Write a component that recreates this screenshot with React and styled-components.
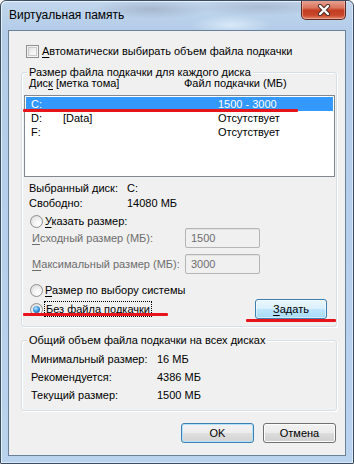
import React from "react";
import styled, { createGlobalStyle, css } from "styled-components";

const GlobalStyle = createGlobalStyle`
  html, body { margin: 0; padding: 0; background: #ffffff; }
  body {
    font-family: "Liberation Sans", Arial, sans-serif;
    font-size: 11px;
    color: #000;
  }
  * { box-sizing: border-box; }
`;

const Window = styled.div`
  position: relative;
  width: 354px;
  height: 464px;
  border: 1px solid #3b4d63;
  border-radius: 6px 6px 1px 1px;
  padding: 0 7px 7px;
  display: flex;
  flex-direction: column;
  white-space: nowrap;
  background:
    radial-gradient(ellipse 60px 10px at 150px 8px, rgba(120,130,150,0.35), transparent),
    radial-gradient(ellipse 70px 9px at 260px 6px, rgba(120,130,150,0.3), transparent),
    radial-gradient(ellipse 40px 10px at 230px 24px, rgba(230,245,255,0.7), transparent),
    linear-gradient(to bottom, #c2d7ee 0px, #b3cce8 30px, #b9d2ee 100%);
  box-shadow: inset 1px 1px 0 rgba(255,255,255,0.65), inset -1px -1px 0 rgba(255,255,255,0.5);
  overflow: hidden;
`;

const TitleBar = styled.div`
  height: 29px;
  display: flex;
  align-items: flex-start;
  justify-content: space-between;
`;

const TitleText = styled.div`
  padding: 7px 0 0 1px;
  font-size: 12px;
  line-height: 15px;
  color: #000;
`;

const CloseButton = styled.div`
  width: 45px;
  height: 20px;
  margin-top: -1px;
  border: 1px solid #5b2a20;
  border-top: none;
  border-radius: 0 0 5px 5px;
  background: linear-gradient(to bottom, #e8a798 0%, #d9765e 40%, #c33d22 55%, #c9472b 80%, #e2866a 100%);
  box-shadow: inset 0 0 0 1px rgba(255,210,200,0.45);
  display: flex;
  align-items: center;
  justify-content: center;
`;

const Client = styled.div`
  width: 338px;
  height: 426px;
  border: 1px solid #6b8099;
  background: #f0f0f0;
  display: flex;
  flex-direction: column;
`;

const CheckRow = styled.div`
  display: flex;
  align-items: center;
  height: 16px;
  margin-top: 12px;
  padding-left: 17px;
  gap: 3px;
`;

const CheckBox = styled.span`
  width: 13px;
  height: 13px;
  border: 1px solid #8e8f8f;
  background: linear-gradient(135deg, #dcdcdc 0%, #f4f4f4 60%, #ffffff 100%);
  box-shadow: inset 0 0 0 1px #f4f4f4, inset 0 0 0 2px #c9c9c9;
`;

const Key = styled.span`
  text-decoration: underline;
  text-underline-offset: 2px;
`;

const GroupBox = styled.div`
  position: relative;
  margin: ${(p) => p.$top}px 8px 0 12px;
  border: 1px solid #d5dfe5;
  border-radius: 3px;
  box-shadow: inset 1px 1px 0 #ffffff, 1px 1px 0 #ffffff;
  padding: ${(p) => p.$pad};
  display: flex;
  flex-direction: column;
`;

const Legend = styled.span`
  position: absolute;
  left: 5px;
  top: -7px;
  padding: 0 2px;
  line-height: 12px;
  background: #f0f0f0;
`;

const ColumnHeaders = styled.div`
  display: grid;
  grid-template-columns: 155px 1fr;
  height: 12px;
  line-height: 12px;
  margin-top: 4px;
  padding-left: 7px;
`;

const ListBox = styled.div`
  margin: 6px 1px 0 2px;
  height: 82px;
  background: #ffffff;
  border: 1px solid #828790;
  padding: 1px;
`;

const DiskRow = styled.div`
  display: grid;
  grid-template-columns: 32px 155px 1fr;
  height: 14px;
  line-height: 14px;
  padding-left: 5px;
  ${(p) =>
    p.$selected &&
    css`
      background: #3399ff;
      color: #ffffff;
    `}
`;

const InfoGrid = styled.div`
  display: grid;
  grid-template-columns: ${(p) => p.$col}px 1fr;
  grid-auto-rows: ${(p) => p.$row}px;
  align-items: center;
  margin-top: ${(p) => p.$top}px;
  padding-left: ${(p) => p.$left}px;
`;

const RadioRow = styled.div`
  display: flex;
  align-items: center;
  gap: 2px;
  height: 14px;
  margin-top: ${(p) => p.$top}px;
  padding-left: 8px;
`;

const Radio = styled.span`
  width: 13px;
  height: 13px;
  border-radius: 50%;
  border: 1px solid #8e8f8f;
  background: radial-gradient(circle at 65% 70%, #ffffff 0%, #f2f2f2 40%, #d4d4d4 100%);
  display: flex;
  align-items: center;
  justify-content: center;
  &::after {
    content: "";
    display: ${(p) => (p.$checked ? "block" : "none")};
    width: 7px;
    height: 7px;
    border-radius: 50%;
    background: radial-gradient(circle at 40% 35%, #bfe6ff 0%, #3d9ae0 45%, #12467a 100%);
  }
`;

const FocusLabel = styled.span`
  outline: 1px dotted #000;
  outline-offset: 0px;
  padding: 0 1px;
  line-height: 14px;
`;

const FieldRow = styled.div`
  display: grid;
  grid-template-columns: 153px 75px;
  align-items: center;
  height: 20px;
  margin-top: ${(p) => p.$top}px;
  padding-left: 10px;
  color: #6d6d6d;
`;

const Field = styled.div`
  height: 20px;
  border: 1px solid #b5b5b5;
  border-radius: 2px;
  background: #f0f0f0;
  color: #6d6d6d;
  padding-left: 5px;
  line-height: 18px;
  box-shadow: inset 0 1px 0 #e2e2e2;
`;

const BottomRow = styled.div`
  display: flex;
  align-items: center;
  justify-content: space-between;
  height: 20px;
  margin-top: 2px;
  padding-left: 8px;
  padding-right: 9px;
`;

const RadioLabel = styled.div`
  display: flex;
  align-items: center;
  gap: 2px;
`;

const Button = styled.div`
  width: ${(p) => p.$w}px;
  height: 20px;
  border-radius: 3px;
  display: flex;
  align-items: center;
  justify-content: center;
  color: #000;
  ${(p) =>
    p.$variant === "hot"
      ? css`
          border: 1px solid #3c7fb1;
          background: linear-gradient(to bottom, #eaf6fd 0%, #d9f0fc 50%, #bee6fd 51%, #a7d9f5 100%);
          box-shadow: inset 0 0 0 1px #ffffff80;
        `
      : p.$variant === "default"
      ? css`
          border: 1px solid #3c7fb1;
          background: linear-gradient(to bottom, #f4f4f4 0%, #ececec 50%, #dfdfdf 51%, #d3d3d3 100%);
          box-shadow: inset 0 0 0 1px #b4e1fb;
        `
      : css`
          border: 1px solid #707070;
          background: linear-gradient(to bottom, #f2f2f2 0%, #ebebeb 50%, #dddddd 51%, #cfcfcf 100%);
          box-shadow: inset 0 0 0 1px #fcfcfc;
        `}
`;

const ButtonBar = styled.div`
  display: flex;
  justify-content: flex-end;
  gap: 9px;
  margin: 12px 9px 0 0;
`;

const RedMark = styled.div`
  position: absolute;
  left: ${(p) => p.$x}px;
  top: ${(p) => p.$y}px;
  width: ${(p) => p.$w}px;
  height: 3px;
  background: #e8141c;
  border-radius: 1px;
`;

const disks = [
  { name: "C:", label: "", size: "1500 - 3000", selected: true },
  { name: "D:", label: "[Data]", size: "Отсутствует" },
  { name: "F:", label: "", size: "Отсутствует" },
];

export default function App() {
  return (
    <>
      <GlobalStyle />
      <Window>
        <TitleBar>
          <TitleText>Виртуальная память</TitleText>
          <CloseButton>
            <svg width="14" height="12" viewBox="0 0 14 12">
              <path d="M3 2 L11 10 M11 2 L3 10" stroke="#4a2a25" strokeWidth="4.2" strokeLinecap="round" />
              <path d="M3 2 L11 10 M11 2 L3 10" stroke="#ffffff" strokeWidth="2.4" strokeLinecap="round" />
            </svg>
          </CloseButton>
        </TitleBar>
        <Client>
          <CheckRow>
            <CheckBox />
            <span>
              <Key>А</Key>втоматически выбирать объем файла подкачки
            </span>
          </CheckRow>

          <GroupBox $top={13} $pad="0 0 7px 0">
            <Legend>Размер файла подкачки для каждого диска</Legend>
            <ColumnHeaders>
              <span>
                Дис<Key>к</Key> [метка тома]
              </span>
              <span>Файл подкачки (МБ)</span>
            </ColumnHeaders>
            <ListBox>
              {disks.map((d) => (
                <DiskRow key={d.name} $selected={d.selected}>
                  <span>{d.name}</span>
                  <span>{d.label}</span>
                  <span>{d.size}</span>
                </DiskRow>
              ))}
            </ListBox>
            <InfoGrid $col={98} $row={15} $top={3} $left={7}>
              <span>Выбранный диск:</span>
              <span>C:</span>
              <span>Свободно:</span>
              <span>14080 МБ</span>
            </InfoGrid>
            <RadioRow $top={4}>
              <Radio />
              <span>
                <Key>У</Key>казать размер:
              </span>
            </RadioRow>
            <FieldRow $top={0}>
              <span>
                <Key>И</Key>сходный размер (МБ):
              </span>
              <Field>1500</Field>
            </FieldRow>
            <FieldRow $top={6}>
              <span>
                <Key>М</Key>аксимальный размер (МБ):
              </span>
              <Field>3000</Field>
            </FieldRow>
            <RadioRow $top={9}>
              <Radio />
              <span>
                <Key>Р</Key>азмер по выбору системы
              </span>
            </RadioRow>
            <BottomRow>
              <RadioLabel>
                <Radio $checked />
                <FocusLabel>
                  <Key>Б</Key>ез файла подкачки
                </FocusLabel>
              </RadioLabel>
              <Button $w={72} $variant="hot">
                <span>
                  <Key>З</Key>адать
                </span>
              </Button>
            </BottomRow>
          </GroupBox>

          <GroupBox $top={13} $pad="9px 0 6px 0">
            <Legend>Общий объем файла подкачки на всех дисках</Legend>
            <InfoGrid $col={126} $row={18} $top={0} $left={9}>
              <span>Минимальный размер:</span>
              <span>16 МБ</span>
              <span>Рекомендуется:</span>
              <span>4386 МБ</span>
              <span>Текущий размер:</span>
              <span>1500 МБ</span>
            </InfoGrid>
          </GroupBox>

          <ButtonBar>
            <Button $w={73} $variant="default">OK</Button>
            <Button $w={73}>Отмена</Button>
          </ButtonBar>
        </Client>
        <RedMark $x={22} $y={108} $w={275} />
        <RedMark $x={22} $y={312} $w={145} />
        <RedMark $x={245} $y={318} $w={90} />
      </Window>
    </>
  );
}
